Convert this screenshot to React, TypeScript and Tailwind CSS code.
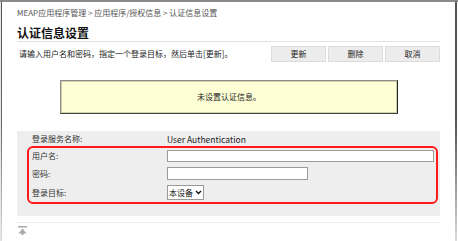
import React from 'react';

const font = { fontFamily: '"Noto Sans CJK SC", "Liberation Sans", sans-serif' };

function TopIcon() {
  return (
    <svg width="9" height="9" viewBox="0 0 9 9">
      <rect x="0" y="0" width="9" height="1.5" fill="#a8a8a8" />
      <path d="M4.5 2.5 L8.5 7.5 H5.5 V9 H3.5 V7.5 H0.5 Z" fill="#a8a8a8" />
    </svg>
  );
}

function Chevron() {
  return (
    <svg width="7" height="5" viewBox="0 0 7 5">
      <path d="M1 1 L3.5 3.5 L6 1" stroke="#111" strokeWidth="1.4" fill="none" />
    </svg>
  );
}

export default function App() {
  return (
    <div className="w-[458px] h-[241px] bg-white overflow-hidden flex flex-col" style={font}>
      <div className="h-[2px] bg-[#8a8a8a]" />
      <div className="flex flex-1">
        <div className="w-[2px] flex">
          <div className="w-[1px] bg-[#e6e6e6]" />
          <div className="w-[1px] bg-gradient-to-b from-[#555] via-[#666] to-[#e0e0e0]" />
        </div>
        <div className="w-[453px] pl-[15px]">
          <div className="mt-[4px] h-[14px] leading-[14px] text-[8px] text-[#555] whitespace-nowrap">
            MEAP应用程序管理 &gt; 应用程序/授权信息 &gt; 认证信息设置
          </div>
          <div className="mt-[5px] w-[423px] h-[16px] leading-[16px] text-[12px] font-bold text-[#111]">
            认证信息设置
          </div>
          <div className="w-[423px] h-[1px] bg-[#e2e2e2]" />
          <div className="mt-[4px] w-[423px] h-[16px] flex items-center justify-between">
            <span className="pl-[2px] text-[8px] text-[#222] whitespace-nowrap">
              请输入用户名和密码，指定一个登录目标，然后单击[更新]。
            </span>
            <div className="flex gap-[2px]">
              {['更新', '删除', '取消'].map((b) => (
                <div
                  key={b}
                  className="w-[55px] h-[16px] flex items-center justify-center bg-[#ececec] border border-[#dcdcdc] text-[8px] text-[#222]"
                >
                  {b}
                </div>
              ))}
            </div>
          </div>
          <div className="mt-[18px] ml-[43px] w-[338px] h-[34px] border border-[#8c8c8c] border-r-[#222] border-b-[#444]">
            <div className="w-full h-full border border-[#cfcfa8] bg-[#ffffd6] flex items-center justify-center text-[8px] text-[#222]">
              未设置认证信息。
            </div>
          </div>
          <div className="mt-[17px] w-[423px] h-[85px] bg-[#eeeeee] pt-[1px]">
            <div className="h-[14px] flex items-center text-[8px] text-[#333]">
              <span className="pl-[15px] w-[150px]">登录服务名称:</span>
              <span className="text-[8.5px] text-[#222]">User Authentication</span>
            </div>
            <div className="ml-[10px] w-[411px] h-[58px] border-2 border-[#ff1a1a] rounded-[6px] text-[8px] text-[#333]">
              <div className="h-[16px] flex items-center">
                <span className="pl-[3px] w-[138px]">用户名:</span>
                <div className="w-[267px] h-[12px] bg-white border border-[#9a9a9a]" />
              </div>
              <div className="h-[19px] flex items-center">
                <span className="pl-[3px] w-[138px]">密码:</span>
                <div className="w-[141px] h-[13px] bg-white border border-[#9a9a9a]" />
              </div>
              <div className="h-[19px] flex items-center">
                <span className="pl-[3px] w-[138px]">登录目标:</span>
                <div className="w-[37px] h-[15px] bg-white border border-[#9a9a9a] flex items-center gap-[2px] pl-[1px] text-[8px] text-[#111]">
                  <span>本设备</span>
                  <Chevron />
                </div>
              </div>
            </div>
          </div>
          <div className="mt-[6px] w-[423px] h-[1px] bg-[#ececec]" />
          <div className="mt-[3px] pl-[1px]">
            <TopIcon />
          </div>
        </div>
        <div className="w-[2px] bg-gradient-to-b from-[#555] via-[#555] to-[#ddd]" />
        <div className="flex-1 bg-white" />
      </div>
    </div>
  );
}
